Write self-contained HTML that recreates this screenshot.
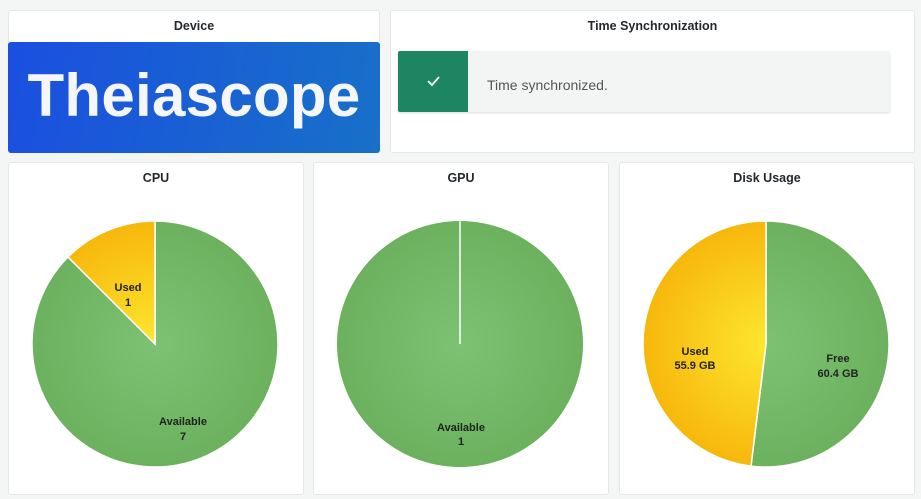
<!DOCTYPE html>
<html><head><meta charset="utf-8"><style>
*{box-sizing:border-box;margin:0;padding:0}
body{width:921px;height:499px;background:#f4f5f5;font-family:"Liberation Sans",sans-serif;position:relative;overflow:hidden}
.p{position:absolute;background:#fff;border:1px solid #e4e6e8;border-radius:3px}
.t{position:absolute;left:0;right:0;top:8px;text-align:center;font-size:12.5px;font-weight:bold;color:#24292e}
svg{position:absolute;left:0;top:0}
.lb{font-family:"Liberation Sans",sans-serif;font-size:11px;font-weight:bold;fill:#222;text-anchor:middle}
</style></head><body>
<div class="p" style="left:8px;top:10px;width:372px;height:143px">
 <div class="t">Device</div>
 <div style="position:absolute;left:-1px;top:31px;width:372px;height:111px;border-radius:3px;background:linear-gradient(100deg,#1a4fe0,#1870c8);color:#f5f6fa;font-size:60px;font-weight:bold;text-align:center;line-height:108px;letter-spacing:0.3px">Theiascope</div>
</div>
<div class="p" style="left:390px;top:10px;width:525px;height:143px">
 <div class="t">Time Synchronization</div>
 <div style="position:absolute;left:7px;top:40px;width:492px;height:61px;background:#f3f4f4;border-radius:2px;box-shadow:0 1px 2px rgba(0,0,0,.15)">
  <div style="position:absolute;left:0;top:0;width:70px;height:61px;background:#1d8562;border-radius:2px 0 0 2px">
   <svg width="70" height="61"><path d="M30 30 L34 34 L41 26" stroke="#fff" stroke-width="1.8" fill="none"/></svg>
  </div>
  <div style="position:absolute;left:89px;top:26px;font-size:14px;color:#555">Time synchronized.</div>
 </div>
</div>
<div class="p" style="left:8px;top:162px;width:296px;height:333px"><div class="t">CPU</div></div>
<div class="p" style="left:313px;top:162px;width:296px;height:333px"><div class="t">GPU</div></div>
<div class="p" style="left:619px;top:162px;width:296px;height:333px"><div class="t">Disk Usage</div></div>
<svg width="921" height="499">
<defs>
<radialGradient id="g1" gradientUnits="userSpaceOnUse" cx="0" cy="0" r="123"><stop offset="0" stop-color="#7dc274"/><stop offset="1" stop-color="#6cb15e"/></radialGradient>
<radialGradient id="y1" gradientUnits="userSpaceOnUse" cx="0" cy="0" r="123"><stop offset="0" stop-color="#fde62e"/><stop offset="1" stop-color="#f7b70c"/></radialGradient>
</defs>
<g transform="translate(155,344)">
 <path d="M0 0 L0 -123 A123 123 0 1 1 -86.97 -86.97 Z" fill="url(#g1)" stroke="#fff" stroke-width="1.5"/>
 <path d="M0 0 L-86.97 -86.97 A123 123 0 0 1 0 -123 Z" fill="url(#y1)" stroke="#fff" stroke-width="1.5"/>
 <text class="lb" x="-27" y="-53">Used</text><text class="lb" x="-27" y="-38">1</text>
 <text class="lb" x="28" y="81">Available</text><text class="lb" x="28" y="96">7</text>
</g>
<g transform="translate(460,344)">
 <circle r="123" fill="url(#g1)"/>
 <line x1="0" y1="0" x2="0" y2="-124" stroke="#fff" stroke-width="1.5"/>
 <text class="lb" x="1" y="87">Available</text><text class="lb" x="1" y="101">1</text>
</g>
<g transform="translate(766,344)">
 <path d="M0 0 L0 -123 A123 123 0 1 1 -14.99 122.08 Z" fill="url(#g1)" stroke="#fff" stroke-width="1.5"/>
 <path d="M0 0 L-14.99 122.08 A123 123 0 0 1 0 -123 Z" fill="url(#y1)" stroke="#fff" stroke-width="1.5"/>
 <text class="lb" x="-71" y="11">Used</text><text class="lb" x="-71" y="25">55.9 GB</text>
 <text class="lb" x="72" y="18">Free</text><text class="lb" x="72" y="33">60.4 GB</text>
</g>
</svg>
</body></html>
